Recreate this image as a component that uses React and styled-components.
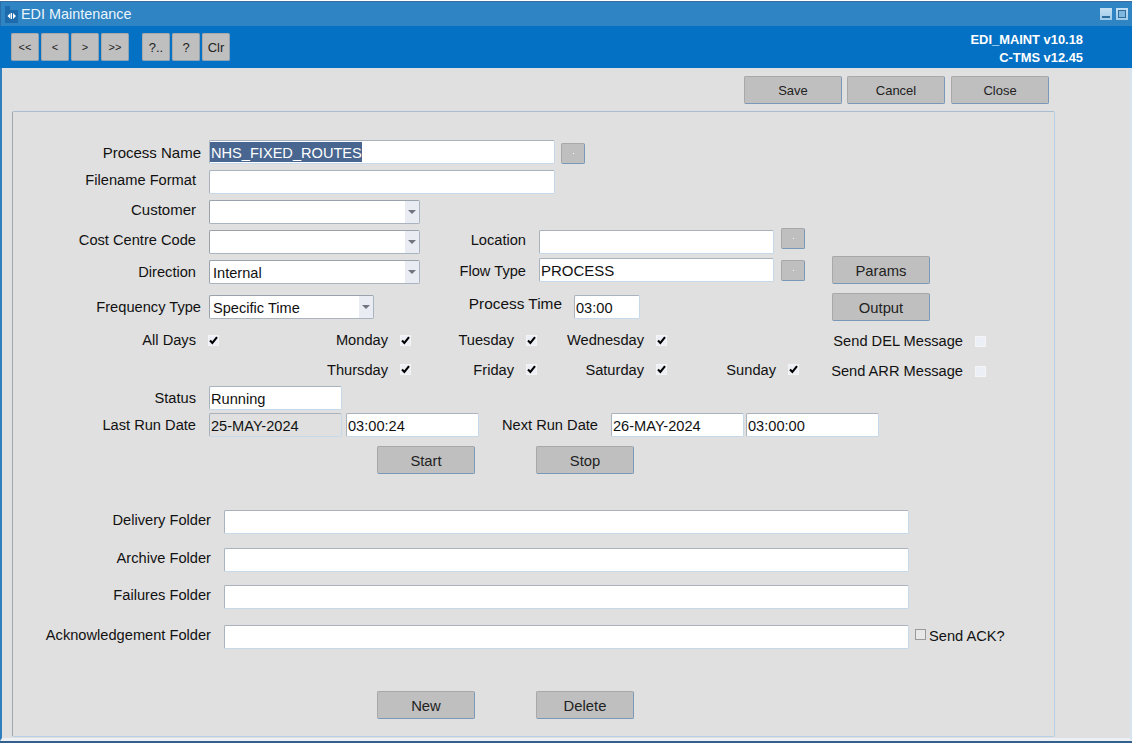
import React from "react";
import styled, { createGlobalStyle } from "styled-components";

const Global = createGlobalStyle`
  html, body { margin: 0; padding: 0; background: #fff; }
  body { font-family: "Liberation Sans", Arial, sans-serif; font-size: 14.6px; color: #111; }
`;

const Win = styled.div`
  width: 1132px; height: 743px; box-sizing: border-box; overflow: hidden;
  padding-top: 1px; display: flex; flex-direction: column; border-bottom: 2px solid #34608e;
`;
const TitleBar = styled.div`
  height: 25px; flex: none; box-sizing: border-box; background: #2f84c4; border-top: 1px solid #3a6c9c; border-left: 1px solid #2a6ea8;
  display: flex; align-items: center; padding: 0 4px 0 4px; color: #eaf4fb; font-size: 14.4px;
`;
const TitleText = styled.span` margin-left: 3px; flex: 1; `;
const WinBtn = styled.span`
  width: 12px; height: 12px; margin-left: 4px; background: linear-gradient(#c5dff2, #9ecbe9); display: flex; box-sizing: border-box;
  padding: ${p => p.$max ? "2px" : "8px 2px 2px"};
  &::before { content: ""; flex: 1; background: ${p => p.$max ? "#7fb6dd" : "#2f6c9e"}; border: ${p => p.$max ? "1px solid #2f6c9e" : "0"}; }
`;
const ToolBar = styled.div`
  height: 42px; flex: none; background: #0471c4; display: flex; align-items: center; padding: 0 49px 0 11px;
  box-sizing: border-box;
`;
const ToolGroup = styled.div` display: flex; gap: 2px; margin-right: 13px; `;
const ToolBtn = styled.button`
  width: 28px; height: 28px; padding: 0; box-sizing: border-box; background: #bfbfbf; color: #222;
  border: 1px solid; border-color: #a9a9a9 #8fa3b5 #8fa3b5 #a9a9a9; border-radius: 2px;
  font: ${p => p.$small ? 11 : 13}px "Liberation Sans", Arial, sans-serif;
`;
const Version = styled.div`
  margin-left: auto; margin-top: 3px; text-align: right; color: #fff; font-weight: bold; font-size: 12.9px; line-height: 18px;
`;
const Body = styled.div`
  flex: 1; background: #e0e0e0; border-left: 2px solid #2f7fbf; border-right: 2px solid #d6e4ef; border-bottom: 3px solid #eceff3;
  padding: 8px 0 0 10px; display: flex; flex-direction: column; min-height: 0;
`;
const TopActions = styled.div` display: flex; height: 28px; padding-left: 732px; gap: 5px; `;
const Btn = styled.button`
  width: 98px; height: 28px; padding: ${p => p.$fs ? 0 : "2px 0 0"}; box-sizing: border-box; flex: none; background: #bfbfbf; color: #222;
  border: 1px solid; border-color: #a8a8a8 #7a99b8 #7a99b8 #a8a8a8; border-radius: 2px;
  margin-left: ${p => p.$ml || 0}px; margin-top: ${p => p.$mt || 0}px;
  font: ${p => p.$fs || 14.8}px "Liberation Sans", Arial, sans-serif;
`;
const Panel = styled.section`
  width: 1043px; height: 626px; margin-top: 7px; box-sizing: border-box; flex: none;
  border: 1px solid; border-color: #a9bdd0 #b8d0e6 #b8d0e6 #9fa9b3; border-radius: 2px;
`;
const Row = styled.div`
  display: flex; align-items: flex-start; height: ${p => p.$h || 24}px; margin-top: ${p => p.$top}px;
`;
const Label = styled.label`
  flex: none; width: ${p => p.$w}px; height: 24px; line-height: 26px; text-align: right; white-space: nowrap;
  margin-top: ${p => p.$mt || 0}px; color: #111; font-size: ${p => p.$fs || 14.65}px;
`;
const Input = styled.div`
  flex: none; box-sizing: border-box; width: ${p => p.$w}px; height: ${p => p.$h || 24}px; padding-left: 1px;
  margin-left: ${p => p.$ml || 0}px; margin-top: ${p => p.$mt || 0}px;
  background: ${p => p.$off ? "#e0e0e0" : "#fff"}; border: 1px solid; border-radius: 2px;
  border-color: #a9b3bd #c6d9ea #c6d9ea #a9b3bd; line-height: 24px; white-space: nowrap;
  font-size: ${p => p.$fs || 14.6}px;
`;
const Selected = styled.span`
  display: inline-block; height: 20px; line-height: 22px; margin: 1px 0 0 -1px; padding-left: 1px;
  vertical-align: top; background: #48668f; color: #fff;
`;
const Select = styled(Input)`
  display: flex; padding-left: 3px; border-color: #9aa3ac #aab4bf #aab4bf #9aa3ac; padding-right: 0;
`;
const SelectText = styled.span` flex: 1; `;
const Arrow = styled.span`
  width: 14px; background: #e9ecf3; display: flex; align-items: center; justify-content: center;
  &::before { content: ""; border: 4px solid transparent; border-top: 4px solid #73737f; border-bottom: 0; }
`;
const Lov = styled.button`
  flex: none; width: 24px; height: 21px; padding: 0; box-sizing: border-box; background: #bfbfbf;
  border: 1px solid; border-color: #a8a8a8 #7a99b8 #7a99b8 #a8a8a8; border-radius: 2px;
  margin-left: ${p => p.$ml}px; margin-top: ${p => p.$mt || 0}px;
  display: flex; align-items: center; justify-content: center;
  &::before { content: ""; width: 1px; height: 1px; background: #fff; }
`;
const Check = styled.span`
  flex: none; box-sizing: border-box; width: 11px; height: 11px; margin-left: ${p => p.$ml}px; margin-top: ${p => p.$mt}px;
  background: ${p => p.$plain ? "#e8e8e8" : "#eceff5"}; border: 1px solid ${p => p.$plain ? "#9a9a9a" : "#f4f4f4"}; display: flex; align-items: center; justify-content: center;
`;
const Tick = () => (
  <svg width="9" height="9" viewBox="0 0 9 9"><path d="M1 4.5 L3.4 7 L8 1.2" fill="none" stroke="#000" strokeWidth="2.1" /></svg>
);
const Plain = styled.span` flex: none; margin: -1px 0 0 3px; line-height: 24px; font-size: 14.65px; `;

export default function App() {
  return (
    <Win>
      <Global />
      <TitleBar>
        <svg width="13" height="18" viewBox="0 0 13 18">
          <path d="M0 1h5v4h8v13H0z" fill="#1d6bac" />
          <path d="M2.5 11l3-3v6zM11 11L8 8v6z" fill="#fff" />
          <path d="M6.5 8v6" stroke="#fff" strokeWidth="1" />
        </svg>
        <TitleText>EDI Maintenance</TitleText>
        <WinBtn /><WinBtn $max />
      </TitleBar>
      <ToolBar>
        <ToolGroup>
          <ToolBtn $small>&lt;&lt;</ToolBtn><ToolBtn $small>&lt;</ToolBtn><ToolBtn $small>&gt;</ToolBtn><ToolBtn $small>&gt;&gt;</ToolBtn>
        </ToolGroup>
        <ToolGroup>
          <ToolBtn>?..</ToolBtn><ToolBtn>?</ToolBtn><ToolBtn>Clr</ToolBtn>
        </ToolGroup>
        <Version>EDI_MAINT v10.18<br />C-TMS v12.45</Version>
      </ToolBar>
      <Body>
        <TopActions>
          <Btn $fs={13}>Save</Btn><Btn $fs={13}>Cancel</Btn><Btn $fs={13} $ml={1}>Close</Btn>
        </TopActions>
        <Panel>
          <Row $top={28}>
            <Label $w={188} $fs={15}>Process Name</Label>
            <Input $ml={8} $w={346}><Selected>NHS_FIXED_ROUTES</Selected></Input>
            <Lov $ml={6} $mt={3} />
          </Row>
          <Row $top={6}>
            <Label $w={183} $mt={-3}>Filename Format</Label>
            <Input $ml={13} $w={346} />
          </Row>
          <Row $top={6}>
            <Label $w={183} $mt={-3} $fs={15}>Customer</Label>
            <Select $ml={13} $w={211}><SelectText /><Arrow /></Select>
          </Row>
          <Row $top={4} $h={26}>
            <Label $w={183} $mt={-1}>Cost Centre Code</Label>
            <Select $ml={13} $w={211} $mt={2}><SelectText /><Arrow /></Select>
            <Label $w={106} $mt={-1}>Location</Label>
            <Input $ml={13} $w={235} $mt={2} />
            <Lov $ml={7} />
          </Row>
          <Row $top={2} $h={28}>
            <Label $w={183} $mt={3}>Direction</Label>
            <Select $ml={13} $w={211} $mt={4}><SelectText>Internal</SelectText><Arrow /></Select>
            <Label $w={106} $mt={2}>Flow Type</Label>
            <Input $ml={13} $w={235} $mt={2} $fs={15}>PROCESS</Input>
            <Lov $ml={7} $mt={4} />
            <Btn $ml={27}>Params</Btn>
          </Row>
          <Row $top={9} $h={28}>
            <Label $w={188} $mt={1}>Frequency Type</Label>
            <Select $ml={8} $w={165} $mt={2}><SelectText>Specific Time</SelectText><Arrow /></Select>
            <Label $w={188} $mt={-2} $fs={15.4}>Process Time</Label>
            <Input $ml={12} $w={66} $mt={2}>03:00</Input>
            <Btn $ml={192}>Output</Btn>
          </Row>
          <Row $top={7}>
            <Label $w={183} $mt={-1}>All Days</Label>
            <Check $ml={12} $mt={7}><Tick /></Check>
            <Label $w={169} $mt={-1}>Monday</Label>
            <Check $ml={12} $mt={7}><Tick /></Check>
            <Label $w={103} $mt={-1}>Tuesday</Label>
            <Check $ml={12} $mt={7}><Tick /></Check>
            <Label $w={107} $mt={-1}>Wednesday</Label>
            <Check $ml={12} $mt={7}><Tick /></Check>
            <Label $w={296}>Send DEL Message</Label>
            <Check $ml={12} $mt={8} />
          </Row>
          <Row $top={6}>
            <Label $w={375} $mt={-1}>Thursday</Label>
            <Check $ml={12} $mt={6}><Tick /></Check>
            <Label $w={103} $mt={-1}>Friday</Label>
            <Check $ml={12} $mt={6}><Tick /></Check>
            <Label $w={107} $mt={-1}>Saturday</Label>
            <Check $ml={12} $mt={6}><Tick /></Check>
            <Label $w={109} $mt={-1}>Sunday</Label>
            <Check $ml={12} $mt={6}><Tick /></Check>
            <Label $w={164}>Send ARR Message</Label>
            <Check $ml={12} $mt={8} />
          </Row>
          <Row $top={4}>
            <Label $w={183} $mt={-1}>Status</Label>
            <Input $ml={13} $w={133}>Running</Input>
          </Row>
          <Row $top={3}>
            <Label $w={183} $mt={-1}>Last Run Date</Label>
            <Input $ml={13} $w={133} $off>25-MAY-2024</Input>
            <Input $ml={4} $w={133}>03:00:24</Input>
            <Label $w={119} $mt={-1}>Next Run Date</Label>
            <Input $ml={13} $w={133}>26-MAY-2024</Input>
            <Input $ml={2} $w={133}>03:00:00</Input>
          </Row>
          <Row $top={9} $h={28}>
            <Btn $ml={364}>Start</Btn>
            <Btn $ml={61}>Stop</Btn>
          </Row>
          <Row $top={36}>
            <Label $w={198} $mt={-3}>Delivery Folder</Label>
            <Input $ml={13} $w={685} />
          </Row>
          <Row $top={14}>
            <Label $w={198} $mt={-3}>Archive Folder</Label>
            <Input $ml={13} $w={685} />
          </Row>
          <Row $top={13}>
            <Label $w={198} $mt={-3}>Failures Folder</Label>
            <Input $ml={13} $w={685} />
          </Row>
          <Row $top={16}>
            <Label $w={198} $mt={-3}>Acknowledgement Folder</Label>
            <Input $ml={13} $w={685} />
            <Check $plain $ml={6} $mt={4} />
            <Plain>Send ACK?</Plain>
          </Row>
          <Row $top={42} $h={28}>
            <Btn $ml={364}>New</Btn>
            <Btn $ml={61}>Delete</Btn>
          </Row>
        </Panel>
      </Body>
    </Win>
  );
}
